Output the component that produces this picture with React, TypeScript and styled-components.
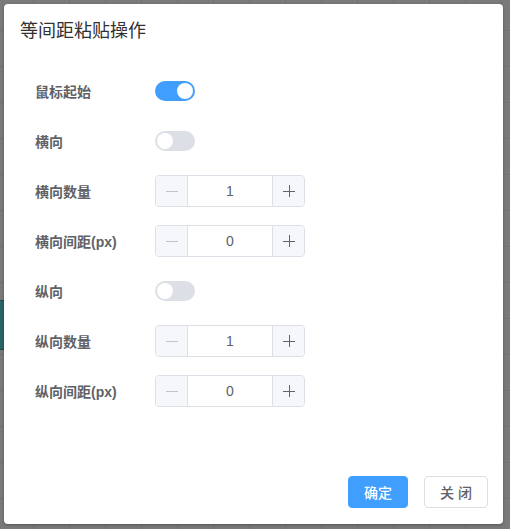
import React, { useState } from "react";
import styled, { createGlobalStyle } from "styled-components";

const GlobalStyle = createGlobalStyle`
  html, body {
    margin: 0;
    padding: 0;
  }
  body {
    font-family: "Liberation Sans", "Noto Sans CJK SC", sans-serif;
  }
`;

const Page = styled.div`
  position: relative;
  width: 510px;
  height: 529px;
  box-sizing: border-box;
  padding: 4px 0 0 4px;
  overflow: hidden;
  background-color: #7a7a7a;
  background-image: linear-gradient(to right, #717171 1px, transparent 1px),
    linear-gradient(to bottom, #717171 1px, transparent 1px);
  background-size: 36px 36px;
  background-position: 33px 30px;
`;

const CanvasShape = styled.div`
  position: absolute;
  left: 0;
  top: 300px;
  width: 6px;
  height: 48px;
  background: #2c6465;
  border-top: 1px solid #244c4c;
  border-bottom: 1px solid #244c4c;
`;

const Dialog = styled.div`
  position: relative;
  width: 499px;
  height: 520px;
  background: #fff;
  border-radius: 4px;
  display: flex;
  flex-direction: column;
  box-shadow: 0 1px 3px rgba(0, 0, 0, 0.3);
`;

const Header = styled.div`
  padding: 15px 16px;
`;

const Title = styled.span`
  font-size: 18px;
  line-height: 24px;
  color: #303133;
`;

const Form = styled.div`
  display: flex;
  flex-direction: column;
  gap: 18px;
  padding: 17px 0 0 31px;
`;

const Row = styled.div`
  display: flex;
  align-items: center;
  height: 32px;
`;

const Label = styled.label`
  width: 120px;
  font-size: 14px;
  font-weight: 700;
  color: #606266;
`;

const SwitchTrack = styled.button<{ $on: boolean }>`
  position: relative;
  width: 40px;
  height: 20px;
  padding: 0;
  border: none;
  border-radius: 10px;
  cursor: pointer;
  background: ${({ $on }) => ($on ? "#409eff" : "#dcdfe6")};
  transition: background 0.2s;
`;

const SwitchKnob = styled.span<{ $on: boolean }>`
  position: absolute;
  top: 2px;
  left: ${({ $on }) => ($on ? "22px" : "2px")};
  width: 16px;
  height: 16px;
  border-radius: 50%;
  background: #fff;
  transition: left 0.2s;
`;

const NumberBox = styled.div`
  display: flex;
  width: 150px;
  height: 32px;
  box-sizing: border-box;
  border: 1px solid #dcdfe6;
  border-radius: 4px;
  overflow: hidden;
`;

const StepButton = styled.button<{ $disabled?: boolean; $side: "left" | "right" }>`
  width: 32px;
  flex: none;
  padding: 0;
  border: none;
  ${({ $side }) =>
    $side === "left" ? "border-right: 1px solid #dcdfe6;" : "border-left: 1px solid #dcdfe6;"}
  background: #f5f7fa;
  color: ${({ $disabled }) => ($disabled ? "#c0c4cc" : "#606266")};
  cursor: ${({ $disabled }) => ($disabled ? "not-allowed" : "pointer")};
  display: flex;
  align-items: center;
  justify-content: center;
`;

const Value = styled.div`
  flex: 1;
  display: flex;
  align-items: center;
  justify-content: center;
  font-size: 14px;
  color: #606266;
`;

const Footer = styled.div`
  margin-top: auto;
  display: flex;
  justify-content: flex-end;
  gap: 16px;
  padding: 0 15px 16px 0;
`;

const Button = styled.button<{ $primary?: boolean }>`
  height: 32px;
  padding: 0 15px;
  box-sizing: border-box;
  border-radius: 4px;
  font-family: "Liberation Sans", "Noto Sans CJK SC", sans-serif;
  font-size: 14px;
  font-weight: 500;
  cursor: pointer;
  border: 1px solid ${({ $primary }) => ($primary ? "#409eff" : "#dcdfe6")};
  background: ${({ $primary }) => ($primary ? "#409eff" : "#fff")};
  color: ${({ $primary }) => ($primary ? "#fff" : "#606266")};
`;

const MinusIcon = () => (
  <svg width="12" height="12" viewBox="0 0 12 12">
    <path d="M0 6.5h12" stroke="currentColor" strokeWidth="1" />
  </svg>
);

const PlusIcon = () => (
  <svg width="12" height="12" viewBox="0 0 12 12">
    <path d="M0 6.5h12M6.5 0v12" stroke="currentColor" strokeWidth="1" />
  </svg>
);

const Switch = ({ value, onChange }: { value: boolean; onChange: (v: boolean) => void }) => (
  <SwitchTrack $on={value} onClick={() => onChange(!value)}>
    <SwitchKnob $on={value} />
  </SwitchTrack>
);

const InputNumber = ({
  value,
  min,
  onChange,
}: {
  value: number;
  min: number;
  onChange: (v: number) => void;
}) => (
  <NumberBox>
    <StepButton
      $side="left"
      $disabled={value <= min}
      onClick={() => value > min && onChange(value - 1)}
    >
      <MinusIcon />
    </StepButton>
    <Value>{value}</Value>
    <StepButton $side="right" onClick={() => onChange(value + 1)}>
      <PlusIcon />
    </StepButton>
  </NumberBox>
);

const App = () => {
  const [fromMouse, setFromMouse] = useState(true);
  const [horizontal, setHorizontal] = useState(false);
  const [hCount, setHCount] = useState(1);
  const [hGap, setHGap] = useState(0);
  const [vertical, setVertical] = useState(false);
  const [vCount, setVCount] = useState(1);
  const [vGap, setVGap] = useState(0);

  return (
    <>
      <GlobalStyle />
      <Page>
        <CanvasShape />
        <Dialog>
          <Header>
            <Title>等间距粘贴操作</Title>
          </Header>
          <Form>
            <Row>
              <Label>鼠标起始</Label>
              <Switch value={fromMouse} onChange={setFromMouse} />
            </Row>
            <Row>
              <Label>横向</Label>
              <Switch value={horizontal} onChange={setHorizontal} />
            </Row>
            <Row>
              <Label>横向数量</Label>
              <InputNumber value={hCount} min={1} onChange={setHCount} />
            </Row>
            <Row>
              <Label>横向间距(px)</Label>
              <InputNumber value={hGap} min={0} onChange={setHGap} />
            </Row>
            <Row>
              <Label>纵向</Label>
              <Switch value={vertical} onChange={setVertical} />
            </Row>
            <Row>
              <Label>纵向数量</Label>
              <InputNumber value={vCount} min={1} onChange={setVCount} />
            </Row>
            <Row>
              <Label>纵向间距(px)</Label>
              <InputNumber value={vGap} min={0} onChange={setVGap} />
            </Row>
          </Form>
          <Footer>
            <Button $primary>确定</Button>
            <Button>关 闭</Button>
          </Footer>
        </Dialog>
      </Page>
    </>
  );
};

export default App;
